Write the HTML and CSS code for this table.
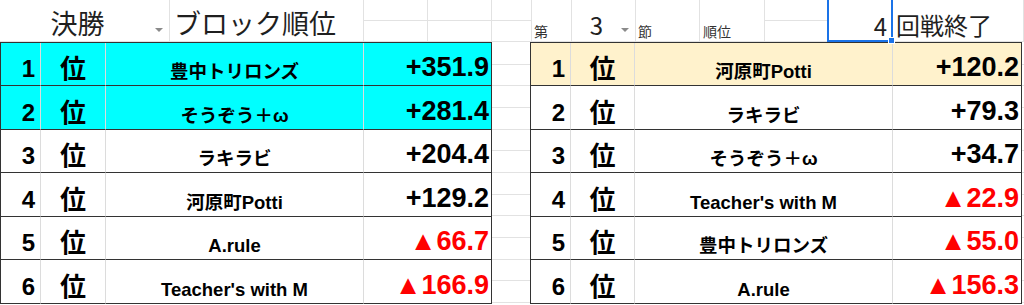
FILE: index.html
```html
<!DOCTYPE html>
<html lang="ja">
<head>
<meta charset="utf-8">
<title>決勝 ブロック順位</title>
<link rel="stylesheet" href="styles.css">
</head>
<body>
<div class="sheet">
  <div class="hdr">
    <div class="hc c-kessho"><span class="ht big center">決勝</span><span class="dd"></span></div>
    <div class="hc c-block"><span class="ht big">ブロック順位</span></div>
    <div class="hc split"></div>
    <div class="hc split"></div>
    <div class="hc split"></div>
    <div class="hc c-dai"><span class="small">第</span></div>
    <div class="hc c-three"><span class="ht mid center">3</span><span class="dd"></span></div>
    <div class="hc c-setsu"><span class="small">節</span></div>
    <div class="hc c-jun"><span class="small">順位</span></div>
    <div class="hc split"></div>
    <div class="hc c-four sel"><span class="ht mid">4</span></div>
    <div class="hc c-end"><span class="ht mid">回戦終了</span></div>
  </div>
  <div class="body">
    <div class="tbl left">
      <div class="row cy"><div class="rk">1</div><div class="i">位</div><div class="nm">豊中トリロンズ</div><div class="sc">+351.9</div></div>
      <div class="row cy"><div class="rk">2</div><div class="i">位</div><div class="nm">そうぞう＋ω</div><div class="sc">+281.4</div></div>
      <div class="row"><div class="rk">3</div><div class="i">位</div><div class="nm">ラキラビ</div><div class="sc">+204.4</div></div>
      <div class="row"><div class="rk">4</div><div class="i">位</div><div class="nm">河原町Potti</div><div class="sc">+129.2</div></div>
      <div class="row"><div class="rk">5</div><div class="i">位</div><div class="nm">A.rule</div><div class="sc neg">▲66.7</div></div>
      <div class="row"><div class="rk">6</div><div class="i">位</div><div class="nm">Teacher's with M</div><div class="sc neg">▲166.9</div></div>
    </div>
    <div class="gap"></div>
    <div class="tbl right">
      <div class="row or"><div class="rk">1</div><div class="i">位</div><div class="nm">河原町Potti</div><div class="sc">+120.2</div></div>
      <div class="row"><div class="rk">2</div><div class="i">位</div><div class="nm">ラキラビ</div><div class="sc">+79.3</div></div>
      <div class="row"><div class="rk">3</div><div class="i">位</div><div class="nm">そうぞう＋ω</div><div class="sc">+34.7</div></div>
      <div class="row"><div class="rk">4</div><div class="i">位</div><div class="nm">Teacher's with M</div><div class="sc neg">▲22.9</div></div>
      <div class="row"><div class="rk">5</div><div class="i">位</div><div class="nm">豊中トリロンズ</div><div class="sc neg">▲55.0</div></div>
      <div class="row"><div class="rk">6</div><div class="i">位</div><div class="nm">A.rule</div><div class="sc neg">▲156.3</div></div>
    </div>
    <div class="gap tail"></div>
  </div>
</div>
</body>
</html>
```
FILE: styles.css
```css
html, body {
  margin: 0;
  padding: 0;
  background: #ffffff;
}
body {
  font-family: "Liberation Sans", "Noto Sans CJK JP", sans-serif;
  color: #000;
}
.sheet {
  width: 1024px;
  height: 305px;
  overflow: hidden;
}

/* ---------- header row ---------- */
.hdr {
  display: grid;
  grid-template-columns: 170px 194px 64px 64px 40px 40px 64px 64px 65px 64px 64px 1fr;
  height: 42px;
}
.hc {
  box-sizing: border-box;
  border-right: 1px solid #e2e2e2;
  border-bottom: 1px solid #e2e2e2;
  display: flex;
  align-items: flex-end;
  position: relative;
  min-width: 0;
}
.split {
  background: linear-gradient(to bottom, transparent 20px, #e2e2e2 20px, #e2e2e2 21px, transparent 21px);
}
.ht {
  font-family: "Noto Sans CJK JP", sans-serif;
  font-weight: 400;
  line-height: 1;
  color: #1f1f1f;
  white-space: nowrap;
}
.big {
  font-size: 27px;
  padding-bottom: 5px;
}
.mid {
  font-size: 24px;
  padding-bottom: 4px;
}
.center {
  flex: 1;
  text-align: center;
}
.small {
  font-family: "Noto Sans CJK JP", sans-serif;
  font-size: 14px;
  line-height: 1;
  color: #333;
  padding: 0 0 3px 2px;
}
.c-block .ht { padding-left: 4px; }
.c-jun .small { padding-left: 3px; }
.c-four { justify-content: flex-end; }
.c-four .ht { padding-right: 5px; padding-bottom: 3px; }
.c-end .ht { padding-left: 3px; }

.dd {
  width: 0;
  height: 0;
  border-left: 4px solid transparent;
  border-right: 4px solid transparent;
  border-top: 4px solid #8a8a8a;
  margin: 0 6px 9px 0;
  flex: none;
}

.sel::after {
  content: "";
  position: absolute;
  left: -2px;
  top: -3px;
  right: -1px;
  bottom: -1px;
  border: 2px solid #1a73e8;
}
.sel::before {
  content: "";
  position: absolute;
  box-sizing: border-box;
  width: 7px;
  height: 7px;
  right: -3px;
  bottom: -3px;
  background: #1a73e8;
  border: 1px solid #fff;
  z-index: 2;
}

/* ---------- body ---------- */
.body {
  display: flex;
  align-items: flex-start;
}
.tbl {
  display: grid;
  grid-template-rows: 43px 44px 43px 44px 43px 44px;
  border-top: 1px solid #333;
  border-left: 1px solid #333;
}
.tbl.left { grid-template-columns: 40px 65px 258px 128px; }
.tbl.right { grid-template-columns: 40px 64px 258px 129px; }
.row { display: contents; }
.row > div {
  box-sizing: border-box;
  border-bottom: 1px solid #333;
  border-right: 1px solid #dcdcdc;
  display: flex;
  align-items: flex-end;
  line-height: 1;
  font-weight: 700;
  white-space: nowrap;
  min-width: 0;
}
.row > div.sc { border-right-color: #333; }
.cy > div { background: #00ffff; }
.or > div { background: #fff2cc; }

.rk {
  justify-content: flex-end;
  font-size: 24px;
  padding: 0 5px 4px 0;
}
.i {
  justify-content: center;
  font-family: "Noto Sans CJK JP", sans-serif;
  font-size: 26px;
  padding-bottom: 5px;
}
.nm {
  justify-content: center;
  font-size: 18.5px;
  padding-bottom: 4px;
}
.sc {
  justify-content: flex-end;
  font-size: 27px;
  padding: 0 2px 4px 0;
}
.sc.neg { color: #ff0000; }

.gap {
  width: 39px;
  height: 263px;
  background: repeating-linear-gradient(to bottom, transparent 0, transparent 20.67px, #e2e2e2 20.67px, #e2e2e2 21.67px);
  background-position: 0 1px;
}
.tail {
  width: 2px;
}
```
